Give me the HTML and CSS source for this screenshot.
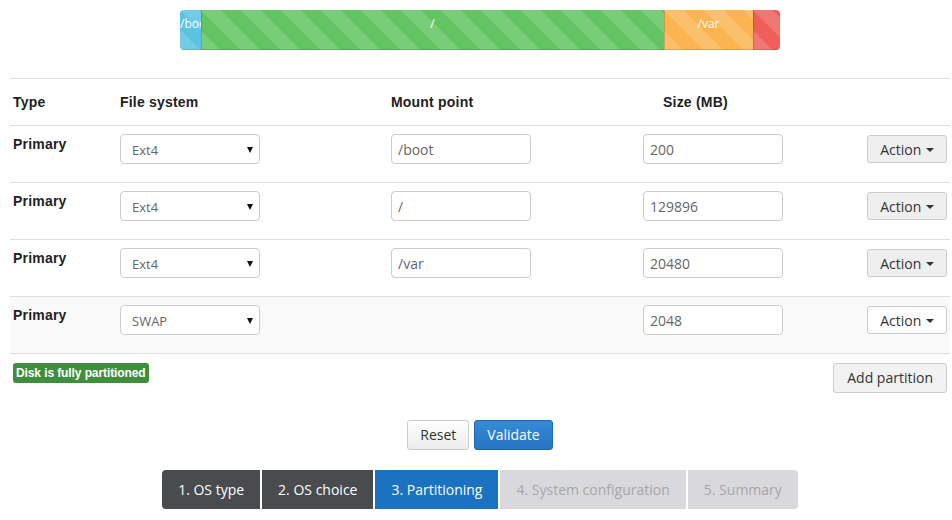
FILE: index.html
```html
<!DOCTYPE html>
<html>
<head>
<meta charset="utf-8">
<link rel="stylesheet" href="styles.css">
</head>
<body>
<div class="page">
  <div class="progress">
    <div class="bar bar-info" style="width:21px">/boot</div>
    <div class="bar bar-success" style="width:463px">/</div>
    <div class="bar bar-warning" style="width:89px">/var</div>
    <div class="bar bar-danger" style="width:27px"></div>
  </div>

  <table class="parts">
    <thead>
      <tr>
        <th class="c-type">Type</th>
        <th class="c-fs">File system</th>
        <th class="c-mp">Mount point</th>
        <th class="c-size">Size (MB)</th>
        <th class="c-act"></th>
      </tr>
    </thead>
    <tbody>
      <tr>
        <td class="type">Primary</td>
        <td><span class="select"><select><option>Ext4</option></select></span></td>
        <td><input class="field" type="text" value="/boot"></td>
        <td><input class="field" type="text" value="200"></td>
        <td class="act"><button class="btn">Action <span class="caret"></span></button></td>
      </tr>
      <tr>
        <td class="type">Primary</td>
        <td><span class="select"><select><option>Ext4</option></select></span></td>
        <td><input class="field" type="text" value="/"></td>
        <td><input class="field" type="text" value="129896"></td>
        <td class="act"><button class="btn">Action <span class="caret"></span></button></td>
      </tr>
      <tr>
        <td class="type">Primary</td>
        <td><span class="select"><select><option>Ext4</option></select></span></td>
        <td><input class="field" type="text" value="/var"></td>
        <td><input class="field" type="text" value="20480"></td>
        <td class="act"><button class="btn">Action <span class="caret"></span></button></td>
      </tr>
      <tr class="hover">
        <td class="type">Primary</td>
        <td><span class="select"><select><option>SWAP</option></select></span></td>
        <td></td>
        <td><input class="field" type="text" value="2048"></td>
        <td class="act"><button class="btn btn-plain">Action <span class="caret"></span></button></td>
      </tr>
    </tbody>
  </table>

  <div class="status-row">
    <span class="label-success">Disk is fully partitioned</span>
    <button class="btn">Add partition</button>
  </div>

  <div class="form-actions">
    <button class="btn">Reset</button>
    <button class="btn btn-primary">Validate</button>
  </div>

  <div class="steps">
    <span class="step done">1. OS type</span>
    <span class="step done">2. OS choice</span>
    <span class="step active">3. Partitioning</span>
    <span class="step todo">4. System configuration</span>
    <span class="step todo">5. Summary</span>
  </div>
</div>
</body>
</html>
```
FILE: styles.css
```css
html, body {
  margin: 0;
  padding: 0;
  background: #fff;
}

body {
  font-family: "Open Sans", "Liberation Sans", Arial, sans-serif;
  font-size: 14px;
  color: #333;
}

.page {
  width: 940px;
  margin-left: 10px;
  padding-top: 10px;
}

/* progress bar */
.progress {
  width: 600px;
  height: 40px;
  margin: 0 auto;
  display: flex;
  border-radius: 4px;
  overflow: hidden;
}

.bar {
  height: 40px;
  line-height: 27px;
  font-size: 12px;
  color: #fff;
  text-align: center;
  white-space: nowrap;
  overflow: hidden;
  box-sizing: border-box;
  background-size: 40px 40px;
  background-image: linear-gradient(45deg,
    rgba(255,255,255,.15) 25%, transparent 25%,
    transparent 50%, rgba(255,255,255,.15) 50%,
    rgba(255,255,255,.15) 75%, transparent 75%, transparent);
  box-shadow: inset 0 -1px 0 rgba(0,0,0,.12);
}

.bar + .bar {
  box-shadow: inset 1px 0 0 rgba(0,0,0,.15), inset 0 -1px 0 rgba(0,0,0,.12);
}

.bar-info { background-color: #5bc2e2; }
.bar-success { background-color: #62c462; }
.bar-warning { background-color: #fbb450; }
.bar-danger { background-color: #ee5f5b; }

/* table */
.parts {
  width: 940px;
  margin-top: 28px;
  border-collapse: collapse;
  table-layout: fixed;
}

.parts th, .parts td {
  text-align: left;
  vertical-align: top;
  border-top: 1px solid #ddd;
  padding: 8px 3px 18px;
  line-height: 20px;
  white-space: nowrap;
}

.parts tbody tr:last-child td {
  border-bottom: 1px solid #ddd;
}

.parts th {
  font-family: "Liberation Sans", Arial, sans-serif;
  font-weight: bold;
  font-size: 14px;
  color: #222;
  padding: 13px 3px 13px;
  letter-spacing: 0.2px;
}

.c-type { width: 101px; }
.c-fs { width: 265px; }
.c-mp { width: 246px; }
.c-size { width: 145px; }
.parts th.c-size { padding-left: 23px; }

.type {
  font-family: "Liberation Sans", Arial, sans-serif;
  font-weight: bold;
  color: #222;
  letter-spacing: 0.2px;
}

.parts td.type { padding-top: 8px; }

.hover td { background: #f9f9f9; }

.select {
  position: relative;
  display: inline-block;
}

.select select {
  appearance: none;
  -webkit-appearance: none;
  width: 140px;
  height: 30px;
  box-sizing: border-box;
  border: 1px solid #ccc;
  border-radius: 4px;
  background: #fff;
  padding: 2px 11px 0;
  font-family: "Open Sans", sans-serif;
  font-size: 13px;
  color: #666;
  display: block;
}

.select::after {
  content: "";
  position: absolute;
  right: 7px;
  top: 13px;
  border-left: 3.5px solid transparent;
  border-right: 3.5px solid transparent;
  border-top: 6px solid #111;
}

.field {
  width: 140px;
  height: 30px;
  box-sizing: border-box;
  border: 1px solid #ccc;
  border-radius: 4px;
  padding: 0 6px;
  font-family: "Open Sans", sans-serif;
  font-size: 14px;
  color: #666;
  display: block;
}

.parts td.act {
  text-align: right;
  padding-right: 3px;
}

/* buttons */
.btn {
  display: inline-block;
  height: 29px;
  box-sizing: border-box;
  padding: 0 12px;
  font-family: "Open Sans", sans-serif;
  font-size: 14px;
  color: #333;
  border: 1px solid #ccc;
  border-radius: 3px;
  background: linear-gradient(#fff, #ececec);
  line-height: 27px;
  white-space: nowrap;
  cursor: pointer;
}

.parts .btn {
  padding: 0 12px;
  height: 28px;
  margin-top: 1px;
  background: #efefef;
}

.parts .btn-plain { background: #fff; }

.caret {
  display: inline-block;
  vertical-align: middle;
  margin-left: 1px;
  margin-top: -2px;
  border-left: 4px solid transparent;
  border-right: 4px solid transparent;
  border-top: 4px solid #333;
}

.status-row {
  display: flex;
  justify-content: space-between;
  align-items: flex-start;
  padding: 9px 3px 0 3px;
}

.label-success {
  display: inline-block;
  background: #3e8e3e;
  color: #fff;
  font-family: "Liberation Sans", Arial, sans-serif;
  font-weight: bold;
  font-size: 12px;
  line-height: 20px;
  padding: 0 3px;
  border-radius: 3px;
  margin-top: 0;
  letter-spacing: -0.1px;
}

.status-row .btn {
  height: 30px;
  padding: 0 13px;
  background: #f2f2f2;
  line-height: 28px;
}

.form-actions {
  display: flex;
  justify-content: center;
  gap: 5px;
  margin-top: 27px;
}

.form-actions .btn {
  height: 30px;
  line-height: 28px;
}

.btn-primary {
  background: linear-gradient(#358ad6, #2775c4);
  border-color: #1f67b0;
  color: #fff;
}

/* steps */
.steps {
  display: flex;
  justify-content: center;
  gap: 2px;
  margin-top: 20px;
}

.step {
  display: block;
  height: 39px;
  line-height: 39px;
  padding: 0 16px;
  font-size: 14px;
  white-space: nowrap;
}

.step:first-child { border-radius: 4px 0 0 4px; }
.step:last-child { border-radius: 0 4px 4px 0; }

.done { background: #494b4f; color: #fff; }
.active { background: #1a72c0; color: #fff; }
.todo { background: #d9d9dc; color: #a6a6aa; }
```
